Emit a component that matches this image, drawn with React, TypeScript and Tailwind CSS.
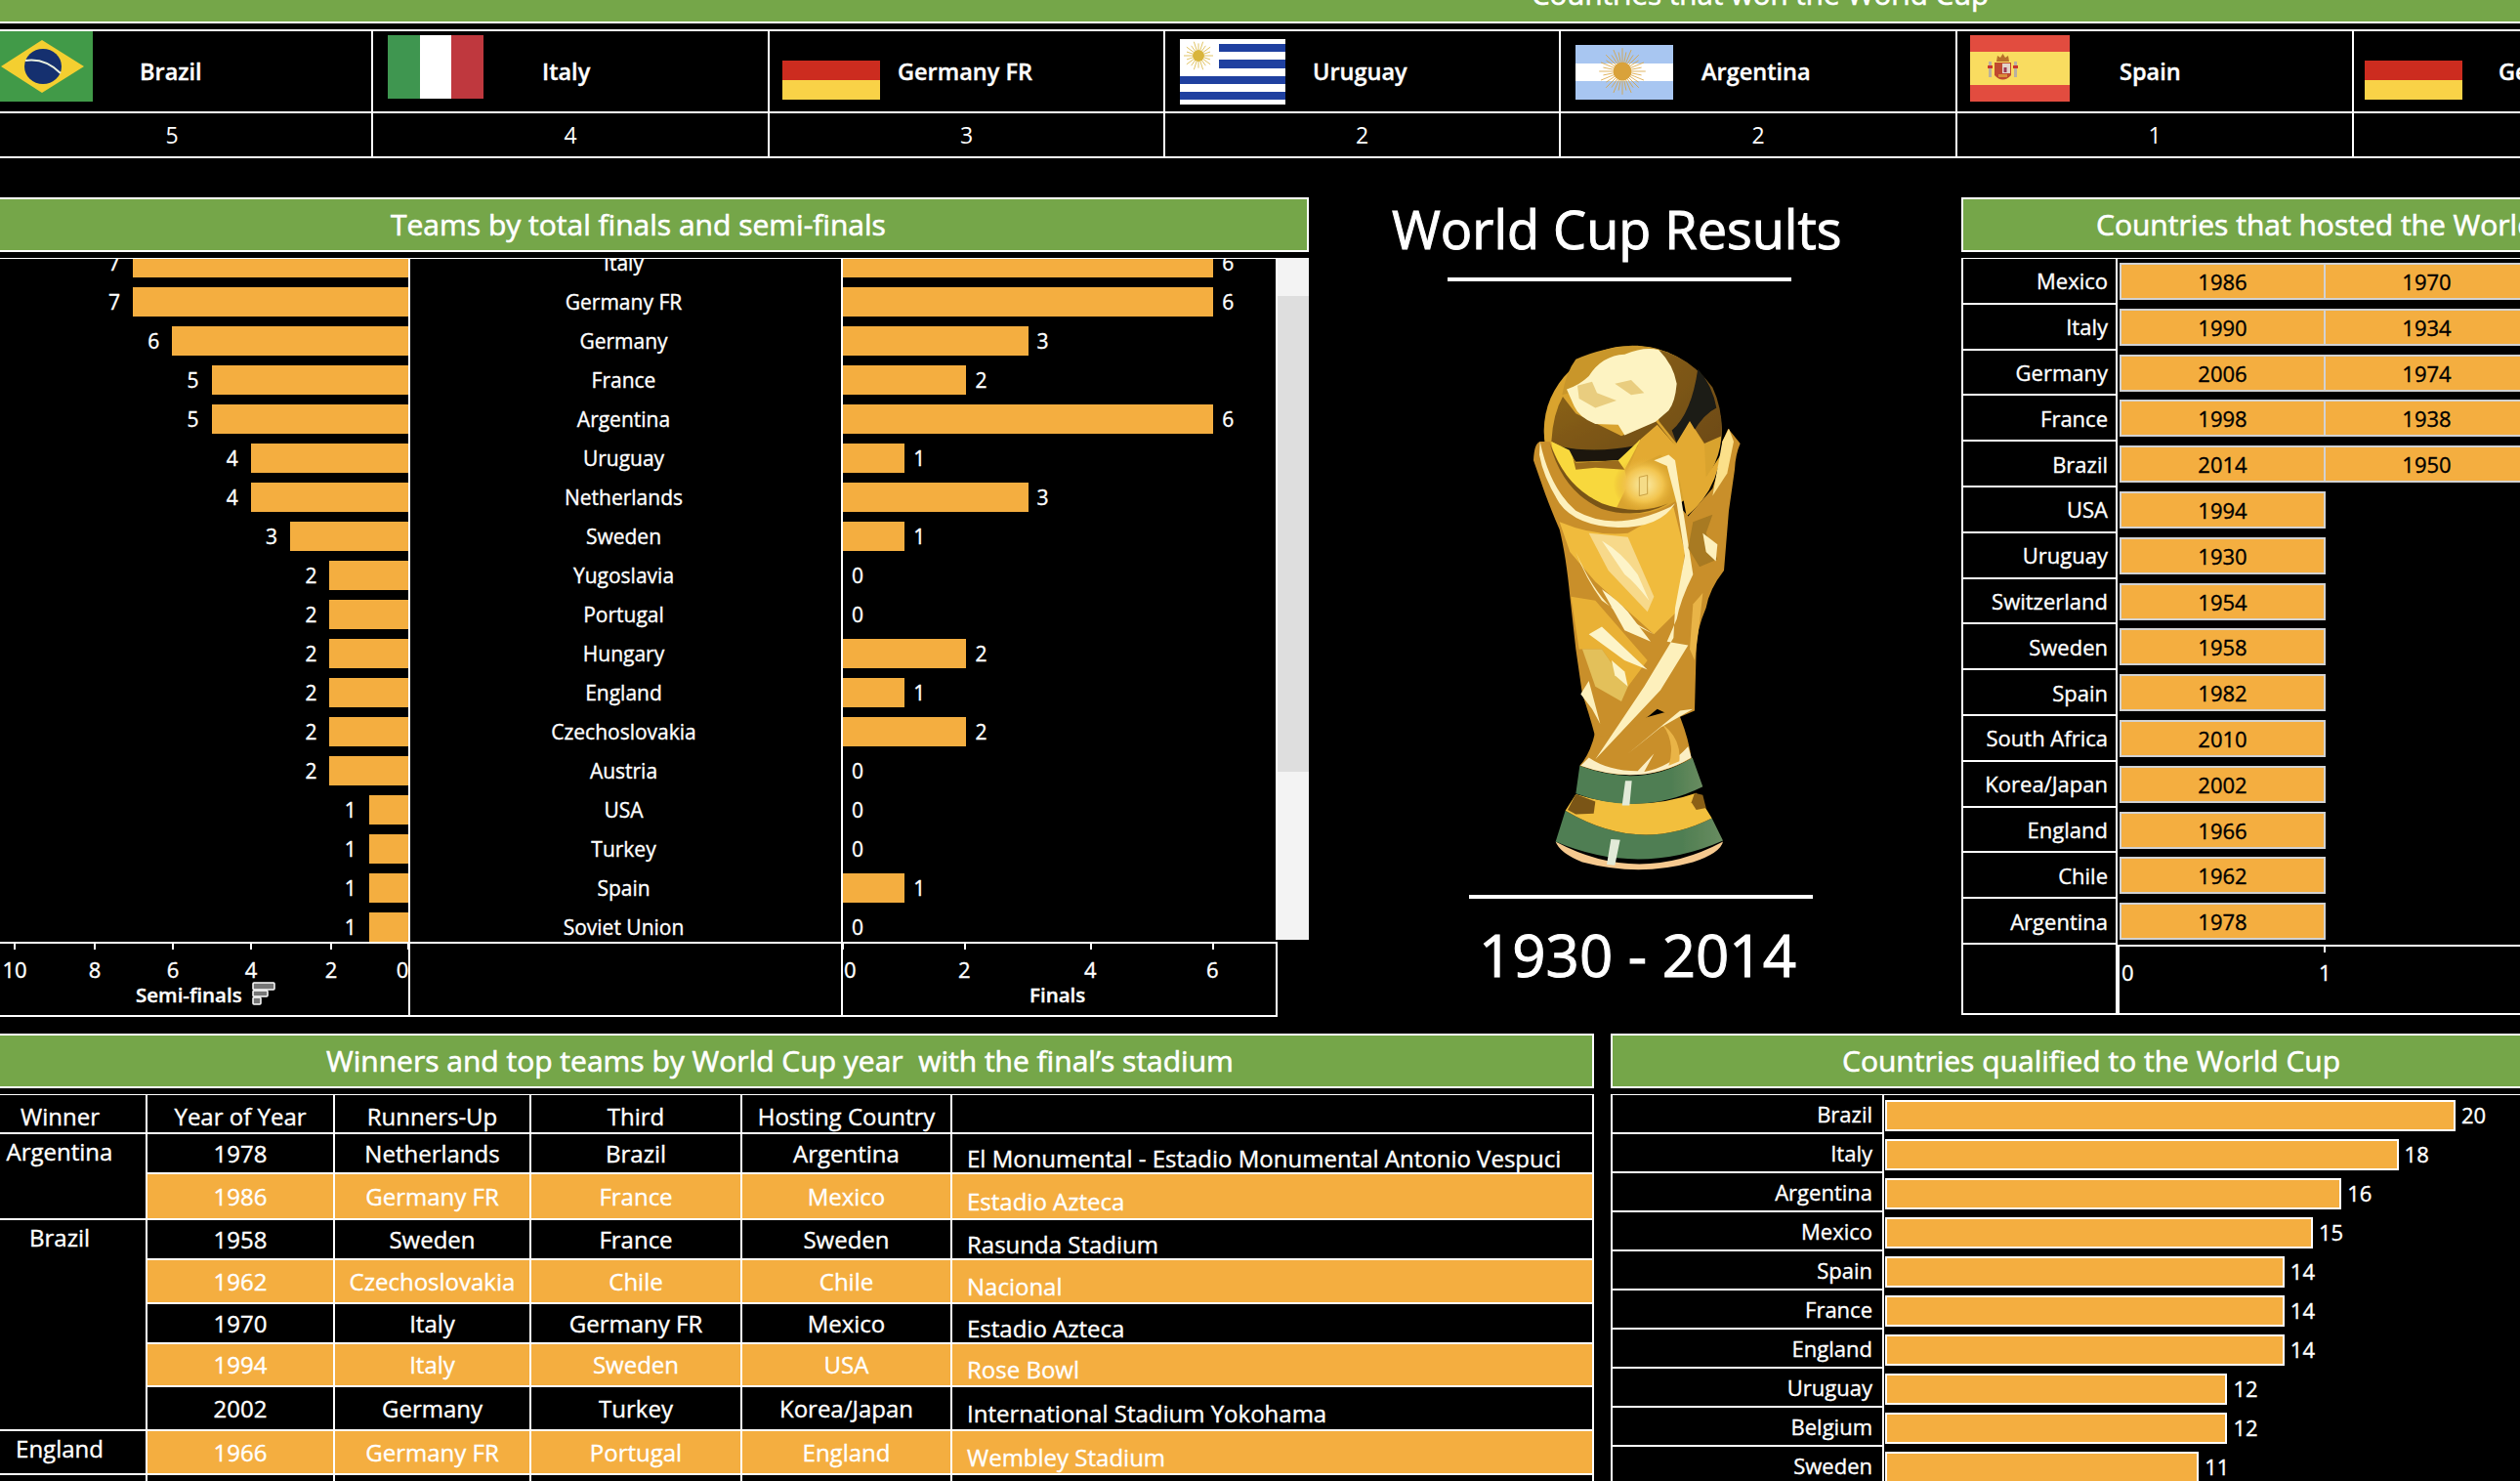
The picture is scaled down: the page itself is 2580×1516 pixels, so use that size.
import React from 'react';

const semiFinals = [
  ['Italy', 7, 6], ['Germany FR', 7, 6], ['Germany', 6, 3], ['France', 5, 2], ['Argentina', 5, 6], ['Uruguay', 4, 1],
  ['Netherlands', 4, 3], ['Sweden', 3, 1], ['Yugoslavia', 2, 0], ['Portugal', 2, 0], ['Hungary', 2, 2], ['England', 2, 1],
  ['Czechoslovakia', 2, 2], ['Austria', 2, 0], ['USA', 1, 0], ['Turkey', 1, 0], ['Spain', 1, 1], ['Soviet Union', 1, 0],
] as [string, number, number][];

const hosts = [
  ['Mexico', '1986', '1970'], ['Italy', '1990', '1934'], ['Germany', '2006', '1974'], ['France', '1998', '1938'],
  ['Brazil', '2014', '1950'], ['USA', '1994'], ['Uruguay', '1930'], ['Switzerland', '1954'], ['Sweden', '1958'],
  ['Spain', '1982'], ['South Africa', '2010'], ['Korea/Japan', '2002'], ['England', '1966'], ['Chile', '1962'], ['Argentina', '1978'],
];

const qualified = [
  ['Brazil', 20], ['Italy', 18], ['Argentina', 16], ['Mexico', 15], ['Spain', 14], ['France', 14], ['England', 14],
  ['Uruguay', 12], ['Belgium', 12], ['Sweden', 11],
] as [string, number][];

const yearGroups = [
  { winner: 'Argentina', rows: [
    ['1978', 'Netherlands', 'Brazil', 'Argentina', 'El Monumental - Estadio Monumental Antonio Vespuci', 'h-[41px]'],
    ['1986', 'Germany FR', 'France', 'Mexico', 'Estadio Azteca', 'h-[45px]'],
  ] },
  { winner: 'Brazil', rows: [
    ['1958', 'Sweden', 'France', 'Sweden', 'Rasunda Stadium', 'h-[41px]'],
    ['1962', 'Czechoslovakia', 'Chile', 'Chile', 'Nacional', 'h-[45px]'],
    ['1970', 'Italy', 'Germany FR', 'Mexico', 'Estadio Azteca', 'h-[41px]'],
    ['1994', 'Italy', 'Sweden', 'USA', 'Rose Bowl', 'h-[44px]'],
    ['2002', 'Germany', 'Turkey', 'Korea/Japan', 'International Stadium Yokohama', 'h-[43px]'],
  ] },
  { winner: 'England', rows: [
    ['1966', 'Germany FR', 'Portugal', 'England', 'Wembley Stadium', 'h-[43px]'],
  ] },
];

const Sun = ({ cx, cy, r, rays, color }: { cx: number; cy: number; r: number; rays: number; color: string }) => (
  <g>
    {Array.from({ length: rays }).map((_, i) => {
      const a = (i / rays) * Math.PI * 2;
      const long = i % 2 === 0 ? r * 2.5 : r * 2.1;
      return (
        <line
          key={i}
          x1={cx + Math.cos(a) * r}
          y1={cy + Math.sin(a) * r}
          x2={cx + Math.cos(a) * long}
          y2={cy + Math.sin(a) * long}
          stroke={color}
          strokeWidth={0.8}
        />
      );
    })}
    <circle cx={cx} cy={cy} r={r} fill={color} />
  </g>
);

const BrazilFlag = () => (
  <svg width="95" height="72" viewBox="0 0 95 72" className="block shrink-0">
    <rect width="95" height="72" fill="#419a48" />
    <polygon points="43,9 86,36 43,63 1,36" fill="#f4cf30" />
    <ellipse cx="44" cy="36" rx="19" ry="18" fill="#15306f" />
    <path d="M26 30 Q46 27 62 43" stroke="#e8f0e0" strokeWidth="2" fill="none" />
  </svg>
);

const ItalyFlag = () => (
  <svg width="98" height="65" viewBox="0 0 98 65" className="block shrink-0">
    <rect width="33" height="65" fill="#3f9650" />
    <rect x="33" width="32" height="65" fill="#ffffff" />
    <rect x="65" width="33" height="65" fill="#bf383e" />
  </svg>
);

const GermanyFlag = () => (
  <svg width="100" height="40" viewBox="0 0 100 40" className="block shrink-0">
    <rect width="100" height="20" fill="#cc2c1f" />
    <rect y="20" width="100" height="20" fill="#f9d247" />
  </svg>
);

const UruguayFlag = () => (
  <svg width="108" height="67" viewBox="0 0 108 67" className="block shrink-0">
    <rect width="108" height="67" fill="#ffffff" />
    <rect x="40" y="5" width="68" height="8" fill="#1f40a0" />
    <rect x="40" y="21" width="68" height="9" fill="#1f40a0" />
    <rect y="38" width="108" height="8" fill="#1f40a0" />
    <rect y="54" width="108" height="8" fill="#1f40a0" />
    <Sun cx={19} cy={17} r={6} rays={20} color="#d9b53c" />
  </svg>
);

const ArgentinaFlag = () => (
  <svg width="100" height="56" viewBox="0 0 100 56" className="block shrink-0">
    <rect width="100" height="56" fill="#a8c6f1" />
    <rect y="19" width="100" height="18" fill="#ffffff" />
    <Sun cx={48} cy={27} r={9.5} rays={32} color="#d9a23a" />
  </svg>
);

const SpainFlag = () => (
  <svg width="102" height="68" viewBox="0 0 102 68" className="block shrink-0">
    <rect width="102" height="68" fill="#e24c3f" />
    <rect y="17" width="102" height="34" fill="#f9dc60" />
    <rect x="19" y="27" width="3" height="16" fill="#b9b0a0" />
    <rect x="45" y="27" width="3" height="16" fill="#b9b0a0" />
    <rect x="18" y="31" width="5" height="3" fill="#c9352c" />
    <rect x="44" y="31" width="5" height="3" fill="#c9352c" />
    <path d="M25 28 H42 V41 Q33.5 50 25 41 Z" fill="#c0492f" />
    <rect x="33" y="29" width="8" height="10" fill="#e3d3c8" />
    <rect x="34.5" y="33" width="3" height="5" fill="#9c3a55" />
    <rect x="29" y="40" width="9" height="3" fill="#d98f3a" />
    <path d="M27 27 L28 21 L31 23 L33.5 19 L36 23 L39 21 L40 27 Z" fill="#b8702a" />
  </svg>
);

const Trophy = () => (
  <svg viewBox="0 0 1200 1505" preserveAspectRatio="none" className="block w-[400px] h-[576px]">
    <defs>
      <radialGradient id="glow" cx="0.5" cy="0.5" r="0.5">
        <stop offset="0" stopColor="#fbeeaa" />
        <stop offset="0.6" stopColor="#f2c44e" />
        <stop offset="1" stopColor="#e0a92e" stopOpacity="0" />
      </radialGradient>
      <linearGradient id="band" x1="0" x2="1" y1="0" y2="0">
        <stop offset="0" stopColor="#4f7e52" />
        <stop offset="0.75" stopColor="#4f7e52" />
        <stop offset="1" stopColor="#698c60" />
      </linearGradient>
      <linearGradient id="brown" x1="0" x2="1" y1="0" y2="1">
        <stop offset="0" stopColor="#8a6118" />
        <stop offset="1" stopColor="#6d4a14" />
      </linearGradient>
      <filter id="soft">
        <feGaussianBlur stdDeviation="1.6" />
      </filter>
    </defs>
    <g filter="url(#soft)">
      {/* base */}
      <path d="M578 1415 Q835 1535 1092 1415 Q1085 1445 1000 1470 Q835 1510 660 1470 Q590 1445 578 1415 Z" fill="#f6c98f" />
      <path d="M608 1332 Q835 1450 1058 1352 L1092 1412 Q835 1510 578 1415 Z" fill="url(#band)" />
      <path d="M748 1408 L776 1410 L760 1478 L735 1476 Z" fill="#e2ead8" />
      <path d="M640 1288 Q830 1340 1010 1285 L1058 1352 Q835 1450 608 1332 Z" fill="#f2bf3c" />
      <path d="M640 1288 L700 1308 L695 1340 L640 1342 L615 1330 Z" fill="#7a5417" />
      <path d="M1005 1285 L1030 1290 L1040 1325 L1010 1330 L995 1310 Z" fill="#8a6018" />
      <path d="M652 1212 Q840 1275 998 1190 L1030 1268 Q840 1350 640 1286 Z" fill="url(#band)" />
      <path d="M792 1252 L812 1252 L805 1318 L782 1318 Z" fill="#e2ead8" />
      {/* stem */}
      <path d="M700 1120 L950 1060 Q985 1130 995 1192 Q840 1270 652 1212 Q685 1180 700 1120 Z" fill="#c98f2a" />
      <path d="M655 1212 Q840 1270 995 1190 L985 1160 Q930 1215 850 1228 L880 1180 L830 1226 Q740 1226 680 1190 Z" fill="#fbeec4" />
      <path d="M905 1100 Q965 1140 958 1200 L925 1212 Q948 1150 905 1100 Z" fill="#e9b446" />
      {/* globe */}
      <ellipse cx="815" cy="316" rx="273" ry="228" fill="#d9a32e" />
      <path d="M780 90 Q960 80 1060 200 Q1092 260 1088 330 L1035 350 L990 290 L950 350 L895 290 L880 110 Z" fill="url(#brown)" />
      <path d="M1015 150 Q1060 195 1072 255 Q1035 270 1000 320 L950 350 L935 315 Q995 270 1015 150 Z" fill="#1c1a12" />
      <path d="M640 125 Q720 92 830 88 L900 100 L760 120 L640 210 L598 220 Q610 160 640 125 Z" fill="#c9962a" />
      <path d="M565 345 Q570 270 600 225 L640 270 L780 330 L885 290 L940 350 L835 340 L790 395 L640 400 L610 365 Z" fill="url(#brown)" />
      <path d="M590 358 Q700 378 830 355 L790 395 L640 398 Z" fill="#1a1810" />
      <path d="M612 205 Q650 195 680 170 Q720 115 790 112 Q850 90 895 100 Q940 140 950 190 Q945 240 925 262 L885 292 L790 328 L770 300 L700 298 Q650 280 635 250 Z" fill="#fdf3c2" />
      <path d="M645 195 L690 185 L705 215 L765 235 L700 255 L650 230 Z" fill="#e9cd7f" />
      <path d="M760 190 L810 180 L850 215 L810 220 Z" fill="#e9cd7f" />
      <path d="M565 345 L620 368 L640 402 L770 395 L840 338 L790 420 L800 460 L765 522 L680 510 L620 470 L575 410 Z" fill="#f8d83c" />
      <path d="M890 300 L945 355 L990 290 L1035 355 L1040 440 L1085 380 Q1070 480 980 545 L960 450 L900 380 L800 420 L840 338 Z" fill="#e3aa32" />
      <ellipse cx="850" cy="460" rx="95" ry="75" fill="url(#glow)" />
      <path d="M835 440 L860 435 L860 485 L835 490 Z" fill="#f5dc88" stroke="#b88a2a" strokeWidth="2" />
      <path d="M630 385 L640 402 L770 395 L790 420 L700 415 L640 420 Z" fill="#9b6c1c" />
      {/* body */}
      <path d="M510 395 Q512 350 530 345 L560 345 Q600 450 700 510 Q830 570 945 505 L985 545 L1060 470 Q1085 410 1090 345 L1108 310 L1145 350 Q1130 380 1128 420 L1110 530 L1095 690 Q1050 740 1040 790 Q1010 850 1010 900 L1005 1065 L950 1085 L890 1060 Q800 1130 700 1135 Q680 1070 660 1020 L640 900 L622 760 Q610 650 590 580 Q560 520 540 470 Z" fill="#c98f2a" />
      <path d="M590 560 Q700 600 800 590 L940 520 L975 640 L950 800 L880 860 L700 720 L622 640 Z" fill="#f0bb3d" />
      <path d="M625 760 L700 770 L860 930 L800 1000 L720 900 L650 900 Z" fill="#e9b135" />
      <path d="M660 900 L720 900 L800 1000 L780 1040 L700 1000 Z" fill="#e3c05a" />
      <path d="M530 345 Q560 470 640 530 Q760 590 930 520 L945 510 Q900 575 770 575 Q640 570 590 510 Q540 440 528 380 Z" fill="#fdf0bc" />
      <path d="M560 350 Q600 480 720 525 Q830 555 925 510 Q830 545 720 510 Q620 470 575 380 Z" fill="#7a5417" />
      <path d="M680 590 L800 600 L880 760 L860 800 L740 690 Z" fill="#f7d98a" />
      <path d="M720 610 Q780 640 830 700 L865 770 Q820 720 790 700 Z" fill="#fdf4c8" />
      <path d="M640 640 Q670 710 720 770 Q800 820 880 860 Q800 830 750 790 Q690 740 640 640 Z" fill="#fdf0bc" />
      <path d="M720 740 Q770 770 800 800 L870 880 L790 850 Z" fill="#fdf4c8" />
      <path d="M680 860 L720 840 L860 955 L790 930 Z" fill="#fdf4c8" />
      <path d="M750 930 L790 960 L800 1000 L760 970 Z" fill="#fdf4c8" />
      <path d="M655 1020 L680 985 L715 1100 L690 1060 Z" fill="#fdf0bc" />
      <path d="M880 395 L925 380 L945 395 L975 560 L1000 700 Q960 770 950 820 L920 880 L985 890 L900 1010 L700 1195 L850 1000 L940 870 L945 790 L975 650 L950 510 L920 410 Z" fill="#fdf0bc" />
      <path d="M985 630 L1020 680 L1075 660 L1040 590 L1060 540 L1000 560 Z" fill="#a87a20" />
      <path d="M1030 590 L1075 620 L1070 665 L1040 640 Z" fill="#fdf0bc" />
      <path d="M1090 345 L1110 310 L1125 345 L1105 430 L1060 490 Z" fill="#fbe08a" />
      <path d="M800 1180 L960 1065 L1000 1060 L900 1110 Z" fill="#fdf0bc" />
      <path d="M1030 750 L1000 780 L990 900 L1005 930 L1020 830 Z" fill="#e9b446" />
    </g>
  </svg>
);

const GreenTitle = ({ text, className }: { text: string; className: string }) => (
  <div className={`flex items-center h-[56px] border-y-2 border-white bg-[#75a649] text-white text-[30px] leading-none whitespace-pre [-webkit-text-stroke:0.6px] ${className}`}>
    {text}
  </div>
);

const finalTicks = [[0, 863], [2, 988], [4, 1117], [6, 1242]];
const semiTicks = [[10, 15], [8, 97], [6, 177], [4, 257], [2, 339], [0, 418]];

const App: React.FC = () => {
  return (
    <div className="w-[2580px] h-[1516px] overflow-hidden bg-black text-white [-webkit-text-stroke:0.35px] font-['Open_Sans',sans-serif]">
      {/* top title */}
      <div className="h-[24px] bg-[#75a649] border-b-2 border-white overflow-hidden">
        <div className="pl-[1568px] -mt-[21px] text-[29.5px] leading-none whitespace-nowrap [-webkit-text-stroke:0.6px]">Countries that won the World Cup</div>
      </div>

      {/* winners strip */}
      <div className="mt-[6px] border-t-2 border-b-2 border-white flex h-[86px] whitespace-nowrap">
        <div className="w-[382px] shrink-0 border-r-2 border-white relative flex">
          <BrazilFlag />
          <span className="pl-[48px] pt-[24px] text-[23.5px] font-semibold leading-[34px]">Brazil</span>
        </div>
        <div className="w-[406px] shrink-0 border-r-2 border-white flex pl-[15px] pt-[4px]">
          <ItalyFlag />
          <span className="pl-[60px] pt-[20px] text-[23.5px] font-semibold leading-[34px]">Italy</span>
        </div>
        <div className="w-[405px] shrink-0 border-r-2 border-white flex pl-[13px] pt-[30px]">
          <GermanyFlag />
          <span className="pl-[18px] -mt-[6px] text-[23.5px] font-semibold leading-[34px]">Germany FR</span>
        </div>
        <div className="w-[405px] shrink-0 border-r-2 border-white flex pl-[15px] pt-[8px]">
          <UruguayFlag />
          <span className="pl-[28px] pt-[16px] text-[23.5px] font-semibold leading-[34px]">Uruguay</span>
        </div>
        <div className="w-[406px] shrink-0 border-r-2 border-white flex pl-[15px] pt-[14px]">
          <ArgentinaFlag />
          <span className="pl-[29px] pt-[10px] text-[23.5px] font-semibold leading-[34px]">Argentina</span>
        </div>
        <div className="w-[406px] shrink-0 border-r-2 border-white flex pl-[13px] pt-[4px]">
          <SpainFlag />
          <span className="pl-[51px] pt-[20px] text-[23.5px] font-semibold leading-[34px]">Spain</span>
        </div>
        <div className="flex pl-[11px] pt-[30px]">
          <GermanyFlag />
          <span className="pl-[37px] -mt-[6px] text-[23.5px] font-semibold leading-[34px]">Germany</span>
        </div>
      </div>
      <div className="flex h-[46px] border-b-2 border-white text-[23px] [-webkit-text-stroke:0px]">
        {[['w-[382px] pr-[28px]', '5'], ['w-[406px]', '4'], ['w-[405px]', '3'], ['w-[405px]', '2'], ['w-[406px]', '2'], ['w-[406px]', '1']].map(([w, n], i) => (
          <div key={i} className={`${w} shrink-0 border-r-2 border-white flex items-center justify-center`}>{n}</div>
        ))}
      </div>

      {/* middle band */}
      <div className="mt-[40px] flex h-[839px]">
        {/* teams by finals */}
        <div className="w-[1340px] shrink-0">
          <GreenTitle text="Teams by total finals and semi-finals" className="border-r-2 pl-[400px]" />
          <div className="mt-[6px] h-px bg-white w-[1306px]" />
          <div className="flex h-[699px]">
            <div className="w-[420px] shrink-0 border-r-2 border-white overflow-hidden">
              <div className="-mt-[11px] text-[21px]">
                {semiFinals.map(([team, semi]) => (
                  <div key={team} className="h-[40px] flex justify-end gap-[13px]">
                    <span className="leading-[30px]">{semi}</span>
                    <div className="h-[30px] bg-[#f4ae40]" style={{ width: semi * 40.3 }} />
                  </div>
                ))}
              </div>
            </div>
            <div className="w-[443px] shrink-0 border-r-2 border-white overflow-hidden">
              <div className="-mt-[11px] text-[21px]">
                {semiFinals.map(([team]) => (
                  <div key={team} className="h-[40px] leading-[30px] text-center pr-[4px]">{team}</div>
                ))}
              </div>
            </div>
            <div className="w-[443px] shrink-0 overflow-hidden">
              <div className="-mt-[11px] text-[21px]">
                {semiFinals.map(([team, , fin]) => (
                  <div key={team} className="h-[40px] flex gap-[9px]">
                    <div className="h-[30px] bg-[#f4ae40]" style={{ width: fin * 63.2 }} />
                    <span className="leading-[30px]">{fin}</span>
                  </div>
                ))}
              </div>
            </div>
            <div className="w-[34px] shrink-0 h-[698px] -mt-px border-l-2 border-white bg-[#f3f3f3] pt-[39px]">
              <div className="h-[487px] bg-[#dedede]" />
            </div>
          </div>
          <div className="w-[1308px] h-[77px] border-y-2 border-r-2 border-white flex text-[22px]">
            <div className="w-[420px] shrink-0 border-r-2 border-white relative">
              {semiTicks.map(([n, x]) => (
                <React.Fragment key={n}>
                  <div className="absolute top-0 w-[2px] h-[6px] bg-white" style={{ left: x - 1 }} />
                  <span className="absolute top-[12px] -translate-x-1/2 leading-[28px]" style={{ left: n === 0 ? x - 6 : x }}>{n}</span>
                </React.Fragment>
              ))}
              <div className="absolute top-[38px] left-[139px] flex items-center gap-[10px] text-[20.5px] font-semibold leading-[28px]">
                Semi-finals
                <svg width="24" height="24" viewBox="0 0 24 24" className="-mt-[2px]">
                  <rect x="1" y="1" width="22" height="7" rx="1" fill="#777" stroke="#fff" strokeWidth="1.5" />
                  <rect x="1" y="9" width="15" height="6" rx="1" fill="#777" stroke="#fff" strokeWidth="1.5" />
                  <rect x="1" y="16" width="8" height="7" rx="1" fill="#777" stroke="#fff" strokeWidth="1.5" />
                </svg>
              </div>
            </div>
            <div className="w-[443px] shrink-0 border-r-2 border-white" />
            <div className="flex-1 relative">
              {finalTicks.map(([n, x]) => (
                <React.Fragment key={n}>
                  <div className="absolute top-0 w-[2px] h-[6px] bg-white" style={{ left: x - 864 }} />
                  <span className="absolute top-[12px] leading-[28px]" style={{ left: n === 0 ? 1 : x - 870 }}>{n}</span>
                </React.Fragment>
              ))}
              <div className="absolute top-[38px] left-[191px] text-[20.5px] font-semibold leading-[28px]">Finals</div>
            </div>
          </div>
        </div>

        {/* centre column */}
        <div className="w-[668px] shrink-0">
          <div className="ml-[85px] h-[66px] pt-[2px] text-[54px] leading-[60px] whitespace-nowrap [-webkit-text-stroke:1px]">World Cup Results</div>
          <div className="ml-[142px] mt-[16px] w-[352px] h-[4px] bg-white" />
          <div className="ml-[60px] mt-[32px]"><Trophy /></div>
          <div className="ml-[164px] mt-[20px] w-[352px] h-[4px] bg-white" />
          <div className="ml-[174px] mt-[21px] text-[60px] leading-[72px] whitespace-nowrap [-webkit-text-stroke:1px]">1930 - 2014</div>
        </div>

        {/* hosts */}
        <div className="flex-1 min-w-0">
          <GreenTitle text="Countries that hosted the World Cup" className="border-l-2 pl-[136px]" />
          <div className="mt-[6px] h-px bg-white" />
          <div className="text-[22px]">
            {hosts.map(([country, ...years]) => (
              <div key={country} className="flex h-[46.8px]">
                <div className="w-[160px] shrink-0 border-x-2 border-b-2 border-white flex items-center justify-end pr-[8px] leading-none">{country}</div>
                <div className="flex ml-[2px] mt-[4px] h-[38px] text-black">
                  {years.map((y) => (
                    <div key={y} className="w-[211px] shrink-0 -mr-[2px] border-2 border-[#d2d2d2] bg-[#f4ae40] flex items-center justify-center leading-none">{y}</div>
                  ))}
                </div>
              </div>
            ))}
          </div>
          <div className="flex h-[72px] text-[22px]">
            <div className="w-[160px] shrink-0 border-x-2 border-b-2 border-white" />
            <div className="flex-1 border-l-2 border-t-2 border-b-2 border-white relative">
              <div className="absolute top-0 left-[209px] w-[2px] h-[6px] bg-white" />
              <span className="absolute top-[12px] left-[2px] leading-[28px]">0</span>
              <span className="absolute top-[12px] left-[204px] leading-[28px]">1</span>
            </div>
          </div>
        </div>
      </div>

      {/* bottom band */}
      <div className="mt-[17px] flex">
        <div className="w-[1632px] shrink-0">
          <GreenTitle text="Winners and top teams by World Cup year  with the final’s stadium" className="border-r-2 pl-[334px]" />
          <div className="mt-[6px] h-px bg-white" />
          <div className="grid grid-cols-[151px_192px_201px_216px_215px_1fr] h-[40px] border-b-2 border-white text-[24px] leading-none border-r-2">
            {['Winner', 'Year of Year', 'Runners-Up', 'Third', 'Hosting Country', ''].map((h, i) => (
              <div key={i} className={`border-r-2 border-white flex items-center justify-center whitespace-nowrap pt-[5px] last:border-r-0 ${i === 0 ? 'pr-[26px]' : ''}`}>{h}</div>
            ))}
          </div>
          {yearGroups.map((group, g) => (
            <div key={group.winner} className="flex border-b-2 border-white">
              <div className="w-[151px] shrink-0 border-r-2 border-white text-center pr-[27px] text-[24px] leading-[36px]">{group.winner}</div>
              <div className="flex-1 min-w-0">
                {group.rows.map((r, i) => {
                  const orange = g === 2 ? true : i % 2 === 1;
                  return (
                    <div
                      key={r[0]}
                      className={`grid grid-cols-[192px_201px_216px_215px_1fr] text-[24px] leading-none whitespace-nowrap border-white ${r[5]} ${i < group.rows.length - 1 ? 'border-b-2' : ''} ${orange ? 'bg-[#f4ae40]' : ''}`}
                    >
                      {r.slice(0, 4).map((v, j) => (
                        <div key={j} className="border-r-2 border-white flex items-center justify-center">{v}</div>
                      ))}
                      <div className="border-r-2 border-white flex items-center pl-[15px] pt-[10px] text-[24px]">{r[4]}</div>
                    </div>
                  );
                })}
              </div>
            </div>
          ))}
          <div className="flex h-[40px]">
            {['w-[151px]', 'w-[192px]', 'w-[201px]', 'w-[216px]', 'w-[215px]', 'flex-1'].map((w, i) => (
              <div key={i} className={`${w} shrink-0 border-r-2 border-white`} />
            ))}
          </div>
        </div>
        <div className="ml-[17px] flex-1 min-w-0">
          <GreenTitle text="Countries qualified to the World Cup" className="border-l-2 pl-[235px]" />
          <div className="mt-[6px] h-px bg-white" />
          <div className="text-[22px]">
            {qualified.map(([country, n]) => (
              <div key={country} className="flex h-[40px]">
                <div className="w-[280px] shrink-0 border-x-2 border-b-2 border-white flex items-center justify-end pr-[10px] leading-none">{country}</div>
                <div className="ml-[1px] mt-[5px] h-[32px] border-2 border-white bg-[#f4ae40]" style={{ width: n * 29.2 }} />
                <span className="ml-[6px] mt-[2px] leading-[36px]">{n}</span>
              </div>
            ))}
          </div>
        </div>
      </div>
    </div>
  );
};

export default App;
